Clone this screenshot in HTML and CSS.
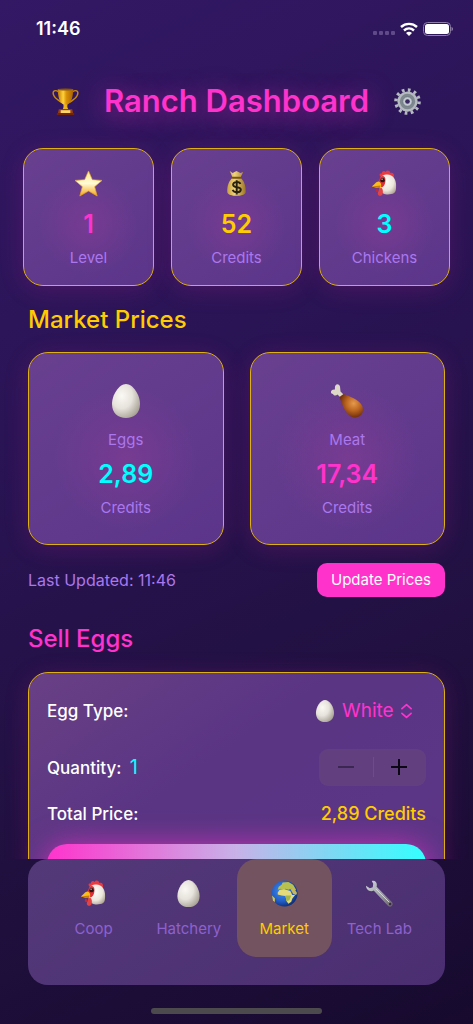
FILE: index.html
```html
<!DOCTYPE html>
<html lang="en">
<head>
    <meta charset="UTF-8">
    <meta name="viewport" content="width=device-width, initial-scale=1.0">
    <title>Ranch Dashboard</title>
    <link rel="stylesheet" href="styles.css">
</head>
<body>
    <!-- Shared emoji artwork -->
    <svg class="defs" width="0" height="0" aria-hidden="true">
        <defs>
            <radialGradient id="egg-fill" cx="35%" cy="35%" r="75%">
                <stop offset="0" stop-color="#fbf9f4"/>
                <stop offset="0.5" stop-color="#e6e2dc"/>
                <stop offset="1" stop-color="#a39d90"/>
            </radialGradient>
            <linearGradient id="gold" x1="0" x2="1" y1="0" y2="0">
                <stop offset="0" stop-color="#c07800"/>
                <stop offset="0.35" stop-color="#ffd23c"/>
                <stop offset="0.55" stop-color="#d99208"/>
                <stop offset="1" stop-color="#a86200"/>
            </linearGradient>
            <linearGradient id="star-fill" x1="0" x2="0" y1="0" y2="1">
                <stop offset="0" stop-color="#ffe98c"/>
                <stop offset="0.5" stop-color="#fffbd8"/>
                <stop offset="1" stop-color="#f5a413"/>
            </linearGradient>
            <linearGradient id="bag-fill" x1="0" x2="1" y1="0" y2="0">
                <stop offset="0" stop-color="#c9a040"/>
                <stop offset="0.4" stop-color="#f0d27c"/>
                <stop offset="1" stop-color="#9a7426"/>
            </linearGradient>
            <radialGradient id="head-fill" cx="40%" cy="35%" r="75%">
                <stop offset="0" stop-color="#fffefa"/>
                <stop offset="0.6" stop-color="#ece6dc"/>
                <stop offset="1" stop-color="#aa9f8e"/>
            </radialGradient>
            <radialGradient id="meat-fill" cx="60%" cy="40%" r="65%">
                <stop offset="0" stop-color="#e69a4d"/>
                <stop offset="0.5" stop-color="#b9631f"/>
                <stop offset="1" stop-color="#67280a"/>
            </radialGradient>
            <radialGradient id="ocean" cx="40%" cy="40%" r="65%">
                <stop offset="0" stop-color="#3f8df0"/>
                <stop offset="0.6" stop-color="#2360c8"/>
                <stop offset="1" stop-color="#0c2a72"/>
            </radialGradient>
            <linearGradient id="steel" x1="0" x2="1" y1="0" y2="1">
                <stop offset="0" stop-color="#d5dade"/>
                <stop offset="0.6" stop-color="#96999f"/>
                <stop offset="1" stop-color="#66605f"/>
            </linearGradient>
        </defs>
        <symbol id="icon-trophy" viewBox="0 0 28 28">
            <path d="M7 4C2 1 0 4 2 8c1 3 4 4 8 7M21 4c5-3 7 0 5 4-1 3-4 4-8 7" fill="none" stroke="#c98a12" stroke-width="1.5"/>
            <path d="M6 1h16c0 8-2 15-6 16v4h-4v-4C8 16 6 9 6 1z" fill="url(#gold)"/>
            <ellipse cx="14" cy="1.500" rx="8" ry="1" fill="#8b5700"/>
            <path d="M12 17h4l-1 2 2 3h-6l2-3z" fill="#eab225"/>
            <path d="M7 22h14l1 5H6z" fill="#9c3e10"/>
            <path d="M9 23h10v3H9z" fill="#ffd66a"/>
            <path d="M5 26h18v2H5z" fill="#702408"/>
        </symbol>
        <symbol id="icon-gear" viewBox="0 0 28 28">
            <circle cx="14" cy="14" r="12" fill="none" stroke="#b4babf" stroke-width="3.600" stroke-dasharray="2.800 3.483"/>
            <circle cx="14" cy="14" r="10.500" fill="#b4babf"/>
            <circle cx="14" cy="14" r="8" fill="#7f888f"/>
            <circle cx="14" cy="14" r="5" fill="#c3cbd1" stroke="#6d7780"/>
            <circle cx="14" cy="14" r="2.400" fill="#3a2862"/>
        </symbol>
        <symbol id="icon-star" viewBox="0 0 28 28">
            <path d="M14 1l4 9 10 .8-7.600 6.500L23 27l-9-5.200L5 27l2.600-9.700L0 10.800 10 10z" fill="url(#star-fill)" stroke="#eca51b" stroke-width=".7" stroke-linejoin="round"/>
        </symbol>
        <symbol id="icon-bag" viewBox="0 0 28 28">
            <path d="M7 1l3 2 4-2 4 2 3-1-3 6c4 3 6 9 5.500 15-.5 5-18.500 5-19 0C4 17 6 11 10 8z" fill="url(#bag-fill)"/>
            <path d="M10 8h8" stroke="#795311" stroke-width="2" stroke-linecap="round"/>
            <path d="M18 14.500c-1-3-7.500-2.500-7.500 .8 0 3.700 8 1.500 8 5 0 3.700-7 3.700-8.500 .3M14.200 10.500v15" fill="none" stroke="#28200f" stroke-width="2"/>
        </symbol>
        <symbol id="icon-chicken" viewBox="0 0 28 28">
            <path d="M10 7C8 5 9 3 11 4c0-3 3-4 4-2 2-3 5-1 5 1 3-1 4 1 4 4l-13 3z" fill="#e83c40"/>
            <path d="M14 5c8-2 12 4 12 11 0 5 0 8-5 9-5 1-10 0-11-4L9 12c0-4 2-6 5-7z" fill="url(#head-fill)"/>
            <path d="M9 9c1-4 6-4 6 1 0 5-2 8-5 8-4 0-3-6-1-9z" fill="#dc3038"/>
            <circle cx="12" cy="10.500" r="2.300" fill="#291713"/>
            <circle cx="11.500" cy="9.500" r=".6" fill="#fff"/>
            <path d="M9 18c3 0 4 4 3 7-1 3-5 2-5-1z" fill="#e34346"/>
            <path d="M6 19c1 0 2 3 1 4-3 0-2-3-1-4z" fill="#c52b31"/>
            <path d="M1 17c3-2 4-5 7-5 3 1 3 5 2 7l-4-.5z" fill="#f9bd1c"/>
            <path d="M1 17l9-1-1 3-5-1z" fill="#cc7c08"/>
        </symbol>
        <symbol id="icon-egg" viewBox="0 0 28 34">
            <path d="M14 0c7 0 14 11 14 20 0 9-6 14-14 14S0 29 0 20C0 11 7 0 14 0z" fill="url(#egg-fill)"/>
        </symbol>
        <symbol id="icon-meat" viewBox="0 0 34 34">
            <path d="M3 10C0 10 0 5 5 5.500 4-1 9-1 10 2.500l.5 5 4 4-3 3-4-4C6 12 4 12 3 10z" fill="#ddd8c8"/>
            <path d="M9.500 13l4-3c9 3 19.500 8 19.500 15.500 0 5.500-4 8-9 8-8-1-11.500-12.500-14.500-20.500z" fill="url(#meat-fill)"/>
        </symbol>
        <symbol id="icon-globe" viewBox="0 0 28 28">
            <circle cx="14" cy="14" r="13.500" fill="url(#ocean)"/>
            <path d="M8 7l3-2 1-2.500 6-.5 5 3 3 5-2 1-3-2-3 1-3-1-2 1-3-1-3 1z" fill="#b8c04e"/>
            <path d="M7 13l2-3 5-.5 6 2 2 4 3 0-3 4-1 3-3 2-2-3-1-5-4-.5-4-1z" fill="#e4da7c"/>
            <path d="M20 9l4-.5 3 5-1 2-3-1z" fill="#c7b75d"/>
            <path d="M1 16l3 3 0 4-2-2z" fill="#ccc75c"/>
            <path d="M15 16l6 0-2 5-3 1z" fill="#a3b64d"/>
        </symbol>
        <symbol id="icon-wrench" viewBox="0 0 28 28">
            <path d="M6 1c4-1 6 2 5 6l16 16c2 3-1 6-4 4L8 11C4 13 0 10 0 6l4 2.500 3-1L7.500 4z" fill="url(#steel)"/>
            <path d="M10 9l14 14" stroke="#d4d8dc"/>
            <circle cx="25" cy="25" r="1.300" fill="#39294d"/>
        </symbol>
    </svg>

    <div class="status-bar">
        <span class="clock">11:46</span>
        <div class="status-icons">
            <span class="signal"><i></i><i></i><i></i><i></i></span>
            <svg class="wifi" viewBox="0 0 18 14">
                <path d="M1 5C5.500 .8 12.500 .8 17 5M4 8.500c3-2.700 7-2.700 10 0" fill="none" stroke="#fff" stroke-width="2.400"/>
                <path d="M6 11c2-1.600 4-1.600 6 0L9 14z" fill="#fff"/>
            </svg>
            <svg class="battery" viewBox="0 0 30 14">
                <rect x=".5" y=".5" width="27" height="13" rx="4" fill="none" stroke="#8d7da8"/>
                <rect x="2" y="2" width="24" height="10" rx="2.500" fill="#fff"/>
                <path d="M28.500 5c2 .5 2 3.500 0 4z" fill="#8d7da8"/>
            </svg>
        </div>
    </div>

    <main class="content">
        <header class="header">
            <button class="icon-button" aria-label="Achievements"><svg class="icon"><use href="#icon-trophy"/></svg></button>
            <h1>Ranch Dashboard</h1>
            <button class="icon-button" aria-label="Settings"><svg class="icon"><use href="#icon-gear"/></svg></button>
        </header>

        <section class="stats">
            <div class="card stat">
                <svg class="icon"><use href="#icon-star"/></svg>
                <div class="value pink">1</div>
                <div class="label">Level</div>
            </div>
            <div class="card stat">
                <svg class="icon"><use href="#icon-bag"/></svg>
                <div class="value gold">52</div>
                <div class="label">Credits</div>
            </div>
            <div class="card stat">
                <svg class="icon"><use href="#icon-chicken"/></svg>
                <div class="value cyan">3</div>
                <div class="label">Chickens</div>
            </div>
        </section>

        <section class="market">
            <h2 class="gold">Market Prices</h2>
            <div class="prices">
                <div class="card price">
                    <svg class="icon large"><use href="#icon-egg"/></svg>
                    <div class="label">Eggs</div>
                    <div class="value cyan">2,89</div>
                    <div class="label">Credits</div>
                </div>
                <div class="card price">
                    <svg class="icon large"><use href="#icon-meat"/></svg>
                    <div class="label">Meat</div>
                    <div class="value pink">17,34</div>
                    <div class="label">Credits</div>
                </div>
            </div>
            <div class="updated">
                <span class="label">Last Updated: 11:46</span>
                <button class="update-button">Update Prices</button>
            </div>
        </section>

        <section class="sell">
            <h2 class="pink">Sell Eggs</h2>
            <div class="card sell-card">
                <div class="row type-row">
                    <label for="egg-type">Egg Type:</label>
                    <div class="picker">
                        <svg class="icon small"><use href="#icon-egg"/></svg>
                        <select id="egg-type">
                            <option>White</option>
                        </select>
                        <svg class="chevrons" viewBox="0 0 12 16"><path d="M1 5.500L6 1l5 4.500M1 10.500L6 15l5-4.500" fill="none" stroke="#ff33cc" stroke-width="1.800" stroke-linecap="round" stroke-linejoin="round"/></svg>
                    </div>
                </div>
                <div class="row quantity-row">
                    <span>Quantity: <span class="quantity cyan">1</span></span>
                    <div class="stepper">
                        <button aria-label="Decrease" disabled><svg viewBox="0 0 16 16"><path d="M0 8h16"/></svg></button>
                        <button aria-label="Increase"><svg viewBox="0 0 16 16"><path d="M0 8h16M8 0v16"/></svg></button>
                    </div>
                </div>
                <div class="row total-row">
                    <span>Total Price:</span>
                    <span class="total gold">2,89 Credits</span>
                </div>
                <button class="sell-button" aria-label="Sell"></button>
            </div>
        </section>
    </main>

    <nav class="tab-bar">
        <button class="tab"><svg class="icon"><use href="#icon-chicken"/></svg><span>Coop</span></button>
        <button class="tab"><svg class="icon"><use href="#icon-egg"/></svg><span>Hatchery</span></button>
        <button class="tab active"><svg class="icon"><use href="#icon-globe"/></svg><span>Market</span></button>
        <button class="tab"><svg class="icon"><use href="#icon-wrench"/></svg><span>Tech Lab</span></button>
    </nav>
    <div class="home-indicator"></div>
</body>
</html>
```
FILE: styles.css
```css
* {
    box-sizing: border-box;
}

body {
    font-family: Inter, 'Liberation Sans', sans-serif;
    font-size: 18px;
    line-height: 24px;
    color: #fff;
    background: linear-gradient(155deg, #331865 0%, #2a1455 35%, #20103f 70%, #170a2e 100%);
    margin: 0;
    height: 100vh;
    display: flex;
    flex-direction: column;
    overflow: hidden;
}

button, select {
    font: inherit;
    color: inherit;
    background: none;
    border: 0;
    padding: 0;
    margin: 0;
}

h1, h2 {
    margin: 0;
}

.defs {
    position: absolute;
}

.pink { color: #ff33cc; }
.gold { color: #ffcc00; }
.cyan { color: #00ffff; }

.status-bar {
    display: flex;
    align-items: center;
    justify-content: space-between;
    height: 58px;
    padding: 0 20px 0 36px;
    flex-shrink: 0;
}

.clock {
    font-weight: 600;
}

.status-icons {
    display: flex;
    align-items: center;
    gap: 5px;
}

.signal {
    display: flex;
    gap: 2px;
    padding-top: 8px;
}

.signal i {
    width: 4px;
    height: 4px;
    border-radius: 1px;
    background: #604a88;
}

.wifi {
    width: 18px;
    height: 14px;
}

.battery {
    width: 30px;
    height: 14px;
}

.content {
    flex: 1;
    min-height: 0;
    overflow: hidden;
}

.header {
    display: flex;
    align-items: center;
    justify-content: space-between;
    padding: 20px 52px 24px;
}

h1 {
    font-size: 31px;
    line-height: 46px;
    font-weight: 600;
    color: #ff33cc;
    text-shadow: 0 4px 24px #ff33cc90;
}

.icon {
    display: block;
    width: 27px;
    height: 27px;
}

.card {
    border: 1px solid #deb010;
    border-radius: 20px;
    background: linear-gradient(145deg, #694090, #5b358a);
    box-shadow: 0 4px 24px #cc219d33;
    text-align: center;
}

.stats {
    display: grid;
    grid-template-columns: repeat(3, 1fr);
    gap: 17px;
    padding: 0 23px;
}

.stat, .price {
    display: flex;
    flex-direction: column;
    align-items: center;
    background: radial-gradient(circle at 50% 55%, #773b92 0, #77409000 50%), linear-gradient(145deg, #694090, #5b358a);
}

.stat {
    padding: 21px 0 15px;
}

.value {
    font-size: 25px;
    line-height: 30px;
    font-weight: 600;
}

.label {
    font-size: 16px;
    line-height: 24px;
    color: #aa77ee;
}

.stat .value {
    margin: 12px 0 7px;
}

.stat .label, .price .label {
    font-size: 15px;
}

.market, .sell {
    padding: 0 28px;
}

h2 {
    font-size: 24px;
    line-height: 32px;
    font-weight: 500;
}

.market h2 {
    margin: 18px 0 16px;
}

.prices {
    display: grid;
    grid-template-columns: 1fr 1fr;
    gap: 26px;
}

.price {
    padding: 31px 0 24px;
}

.large {
    width: 34px;
    height: 34px;
}

.price .label {
    margin-top: 10px;
}

.price .value {
    margin-top: 7px;
}

.price .value + .label {
    margin-top: 7px;
}

.updated {
    display: flex;
    align-items: center;
    justify-content: space-between;
    margin: 18px 0 26px;
}

.update-button {
    font-size: 15px;
    line-height: 24px;
    padding: 5px 14px;
    border-radius: 10px;
    background: #ff33cc;
}

.sell h2 {
    margin-bottom: 17px;
}

.sell-card {
    padding: 17px 18px;
    background: linear-gradient(145deg, #694085, #5a3584 40%, #5d3588);
    font-size: 17px;
    font-weight: 500;
}

.row {
    display: flex;
    align-items: center;
    justify-content: space-between;
}

.type-row {
    height: 42px;
    padding-right: 14px;
}

.picker {
    display: flex;
    align-items: center;
    gap: 7px;
}

.small {
    width: 20px;
    height: 22px;
}

.picker select {
    appearance: none;
    font-size: 19px;
    font-weight: 400;
    color: #ff33cc;
}

.chevrons {
    width: 11px;
    height: 16px;
}

.quantity-row {
    height: 38px;
    margin-top: 16px;
}

.quantity {
    font-size: 20px;
    font-weight: 400;
    margin-left: 4px;
}

.stepper {
    display: flex;
    width: 107px;
    height: 37px;
    border-radius: 9px;
    background: #624080;
}

.stepper button {
    flex: 1;
    display: flex;
    align-items: center;
    justify-content: center;
}

.stepper button + button {
    background: linear-gradient(#6d4d88, #6d4d88) left center / 1px 20px no-repeat;
}

.stepper svg {
    width: 16px;
    height: 16px;
    fill: none;
    stroke: #0c0714;
    stroke-width: 2;
}

.stepper button:disabled svg {
    stroke: #3c2652;
}

.total-row {
    height: 24px;
    margin-top: 16px;
}

.total {
    font-size: 18px;
}

.sell-button {
    display: block;
    width: 100%;
    height: 60px;
    margin-top: 18px;
    border-radius: 20px;
    background: linear-gradient(90deg, #ff33cc, #c8b2e8 50%, #33ffff);
    box-shadow: 0 2px 30px #ff33ccb0;
}

.tab-bar {
    display: grid;
    grid-template-columns: repeat(4, 1fr);
    align-items: start;
    height: 126px;
    flex-shrink: 0;
    margin: 0 28px;
    padding: 0 18px;
    border-radius: 20px;
    background: linear-gradient(145deg, #543979, #4a2e71);
}

.tab {
    display: flex;
    flex-direction: column;
    align-items: center;
    gap: 10px;
    padding: 21px 0 16px;
    border-radius: 20px;
    font-size: 15px;
    line-height: 24px;
    color: #8d61ce;
}

.tab.active {
    color: #ffcc00;
    background: #73535f;
}

.home-indicator {
    flex-shrink: 0;
    width: 36%;
    height: 6px;
    margin: 23px auto 10px;
    border-radius: 3px;
    background: #4d4a4e;
}
```
